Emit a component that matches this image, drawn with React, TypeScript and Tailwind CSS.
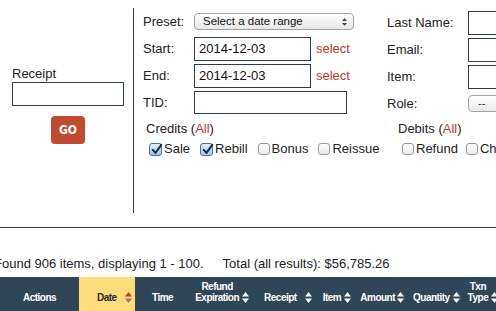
import React from 'react';

const Box = ({ checked }: { checked?: boolean }) =>
  checked ? (
    <span className="relative inline-block w-[13px] h-[13px] shrink-0 rounded-[3px] border border-[#4d6f9e] bg-linear-to-b from-[#e3eefc] to-[#a8c6ec]">
      <svg viewBox="0 0 14 14" className="absolute left-[1px] top-[-1px] w-[12px] h-[13px]">
        <path d="M2 7.5 L5.2 11 L12 1.5" fill="none" stroke="#1c2c4c" strokeWidth="2.4" strokeLinecap="round" strokeLinejoin="round" />
      </svg>
    </span>
  ) : (
    <span className="inline-block w-[12px] h-[12px] shrink-0 rounded-[3px] border border-[#9c9c9c] bg-linear-to-b from-white to-[#e9e9e9]" />
  );

const Check = ({ label, checked }: { label: string; checked?: boolean }) => (
  <label className="flex items-center gap-[2px] shrink-0">
    <Box checked={checked} />
    <span>{label}</span>
  </label>
);

const Sort = ({ up = '#ffffff', down = '#ffffff' }: { up?: string; down?: string }) => (
  <svg viewBox="0 0 7 11" className="w-[7px] h-[11px] shrink-0">
    <polygon points="3.5,0 7,4.5 0,4.5" fill={up} />
    <polygon points="0,6.5 7,6.5 3.5,11" fill={down} />
  </svg>
);

const Row = ({ label, w, children }: { label: string; w: string; children?: React.ReactNode }) => (
  <div className="flex items-center h-[27px]">
    <span className={`${w} shrink-0`}>{label}</span>
    {children}
  </div>
);

export default function App() {
  return (
    <div className="w-[496px] h-[311px] overflow-hidden bg-white text-[13px] text-[#222] font-['Liberation_Sans',Arial,sans-serif]">
      {/* filter form */}
      <div className="flex h-[227px]">
        {/* receipt lookup */}
        <div className="w-[133px] shrink-0 pt-[66px] pl-[12px]">
          <div className="leading-[16px]">Receipt</div>
          <div className="w-[112px] h-[24px] border border-[#2d3e4a]" />
          <button className="mt-[10px] ml-[39px] w-[34px] h-[28px] rounded-[4px] bg-[#c24a30] text-white text-[12px] font-bold font-['DejaVu_Sans_Condensed',sans-serif] flex items-center justify-center">
            GO
          </button>
        </div>

        <div className="w-px shrink-0 bg-[#2d3e4a] mt-[8px] h-[205px]" />

        {/* dates */}
        <div className="w-[253px] shrink-0 pl-[9px] pt-[8px]">
          <Row label="Preset:" w="w-[51px]">
            <div className="w-[160px] h-[17px] rounded-[4px] border border-[#a3a3a3] bg-linear-to-b from-white to-[#e8e8e8] flex items-center pl-[8px] pr-[6px] text-[11.5px] text-[#111]">
              <span className="flex-1">Select a date range</span>
              <svg viewBox="0 0 6 9" className="w-[5px] h-[8px]">
                <polygon points="3,0 6,3.2 0,3.2" fill="#444" />
                <polygon points="0,5.8 6,5.8 3,9" fill="#444" />
              </svg>
            </div>
          </Row>
          <Row label="Start:" w="w-[51px]">
            <div className="w-[117px] h-[24px] border border-[#2d3e4a] flex items-center pl-[4px] text-[#111]">2014-12-03</div>
            <span className="ml-[5px] text-[#c0392b]">select</span>
          </Row>
          <Row label="End:" w="w-[51px]">
            <div className="w-[117px] h-[24px] border border-[#2d3e4a] flex items-center pl-[4px] text-[#111]">2014-12-03</div>
            <span className="ml-[5px] text-[#c0392b]">select</span>
          </Row>
          <Row label="TID:" w="w-[51px]">
            <div className="w-[153px] h-[23px] border border-[#2d3e4a]" />
          </Row>

          <div className="mt-[5px] pl-[3px] leading-[16px]">
            Credits (<span className="text-[#c0392b]">All</span>)
          </div>
          <div className="mt-[4px] pl-[6px] flex items-center gap-[10px] leading-[16px]">
            <Check label="Sale" checked />
            <Check label="Rebill" checked />
            <Check label="Bonus" />
            <Check label="Reissue" />
          </div>
        </div>

        {/* customer */}
        <div className="shrink-0 pt-[9px]">
          <Row label="Last Name:" w="w-[81px]">
            <div className="w-[150px] h-[24px] shrink-0 border border-[#2d3e4a]" />
          </Row>
          <Row label="Email:" w="w-[81px]">
            <div className="w-[150px] h-[24px] shrink-0 border border-[#2d3e4a]" />
          </Row>
          <Row label="Item:" w="w-[81px]">
            <div className="w-[150px] h-[24px] shrink-0 border border-[#2d3e4a]" />
          </Row>
          <Row label="Role:" w="w-[81px]">
            <div className="w-[80px] h-[17px] shrink-0 rounded-[4px] border border-[#a3a3a3] bg-linear-to-b from-white to-[#e8e8e8] flex items-center pl-[9px] text-[11px] text-[#333]">
              --
            </div>
          </Row>

          <div className="mt-[4px] pl-[11px] leading-[16px]">
            Debits (<span className="text-[#c0392b]">All</span>)
          </div>
          <div className="mt-[4px] pl-[15px] flex items-center gap-[8px] leading-[16px]">
            <Check label="Refund" />
            <Check label="Chargeback" />
          </div>
        </div>
      </div>

      <div className="h-px bg-[#2f3e46]" />

      {/* result summary */}
      <div className="mt-[28px] ml-[-6px] leading-[16px] whitespace-nowrap flex">
        <span className="shrink-0">Found 906 items, displaying 1 - 100.</span>
        <span className="ml-[19px] shrink-0">Total (all results): $56,785.26</span>
      </div>

      {/* table header */}
      <div className="mt-[5px] h-[34px] bg-[#2f4657] flex items-stretch text-white text-[10px] font-bold leading-[11px] tracking-[-0.5px] whitespace-nowrap">
        <div className="w-[79px] shrink-0 flex items-end justify-center pb-[8px]">Actions</div>
        <div className="w-[56px] shrink-0 bg-[#fddc7c] text-[#2b2b2b] flex items-end pb-[8px] pl-[18px] gap-[8px]">
          <span>Date</span>
          <Sort up="#c0392b" down="#8d7e62" />
        </div>
        <div className="shrink-0 flex items-end pb-[8px]">
          <span className="ml-[17px]">Time</span>
          <div className="ml-[22px] flex items-end gap-[3px]">
            <span className="text-center">Refund<br />Expiration</span>
            <Sort />
          </div>
          <div className="ml-[15px] flex items-end gap-[8px]">
            <span>Receipt</span>
            <Sort />
          </div>
          <div className="ml-[11px] flex items-end gap-[3px]">
            <span>Item</span>
            <Sort />
          </div>
          <div className="ml-[9px] flex items-end gap-[2px]">
            <span>Amount</span>
            <Sort />
          </div>
          <div className="ml-[9px] flex items-end gap-[3px]">
            <span>Quantity</span>
            <Sort />
          </div>
          <div className="ml-[8px] flex items-end gap-[3px]">
            <span className="text-center">Txn<br />Type</span>
            <Sort />
          </div>
        </div>
      </div>
    </div>
  );
}
